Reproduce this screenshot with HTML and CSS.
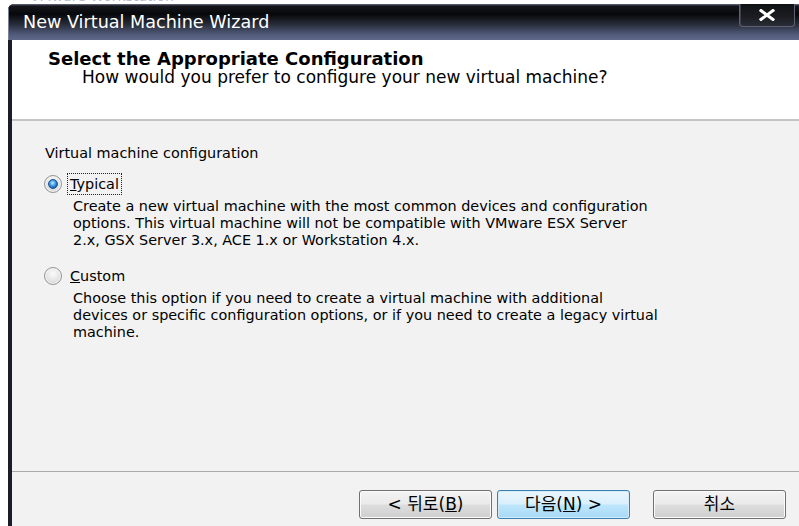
FILE: index.html
```html
<!DOCTYPE html>
<html lang="en">
<head>
<meta charset="utf-8">
<title>New Virtual Machine Wizard</title>
<link rel="stylesheet" href="styles.css">
</head>
<body>
  <div class="backdrop"><span>VMware Workstation</span></div>
  <div class="window">
    <div class="titlebar">
      <span class="title">New Virtual Machine Wizard</span>
      <button class="close" aria-label="Close">
        <svg width="16" height="12" viewBox="0 0 16 12"><path d="M2 1.5 L14 10.5 M14 1.5 L2 10.5" stroke="#fff" stroke-width="3" stroke-linecap="square"/></svg>
      </button>
    </div>
    <div class="frame">
      <header class="page-head">
        <h1>Select the Appropriate Configuration</h1>
        <p>How would you prefer to configure your new virtual machine?</p>
      </header>
      <main class="page-body">
        <p class="group-label">Virtual machine configuration</p>
        <div class="option">
          <span class="radio checked"></span>
          <span class="opt-label focused"><u>T</u>ypical</span>
        </div>
        <p class="desc">Create a new virtual machine with the most common devices and configuration<br>options. This virtual machine will not be compatible with VMware ESX Server<br>2.x, GSX Server 3.x, ACE 1.x or Workstation 4.x.</p>
        <div class="option custom">
          <span class="radio"></span>
          <span class="opt-label"><u>C</u>ustom</span>
        </div>
        <p class="desc">Choose this option if you need to create a virtual machine with additional<br>devices or specific configuration options, or if you need to create a legacy virtual<br>machine.</p>
      </main>
      <footer class="buttons">
        <button class="btn">&lt; 뒤로(<u>B</u>)</button>
        <button class="btn default">다음(<u>N</u>) &gt;</button>
        <button class="btn cancel">취소</button>
      </footer>
    </div>
  </div>
</body>
</html>
```

FILE: styles.css
```css
html, body {
  margin: 0;
  padding: 0;
  background: #ffffff;
  overflow: hidden;
}

body {
  width: 799px;
  height: 526px;
  font-family: "DejaVu Sans", "Noto Sans CJK KR", sans-serif;
  color: #000;
}

*, *::before, *::after {
  box-sizing: border-box;
}

/* sliver of the parent window's caption peeking above the dialog */
.backdrop {
  height: 4px;
  overflow: hidden;
  padding-left: 30px;
}
.backdrop span {
  display: block;
  margin-top: -11px;
  font-size: 14px;
  line-height: 14px;
  color: #b4bbcc;
}

.window {
  margin-left: 8px;
  height: 522px;
  display: flex;
  flex-direction: column;
  border-top-left-radius: 6px;
  overflow: hidden;
  background: #1d2029;
}

.titlebar {
  height: 36px;
  flex: none;
  display: flex;
  justify-content: space-between;
  align-items: flex-start;
  padding-left: 15px;
  background: linear-gradient(to bottom,
    #6a7084 0, #14161c 2px, #07080a 28%, #252a36 55%, #4d5775 82%, #5e698b 100%);
  box-shadow: inset 1px 0 #7b8296;
}

.title {
  color: #ffffff;
  font-size: 17.6px;
  line-height: 37px;
}

.close {
  width: 56px;
  height: 23px;
  margin: 0 4px 0 0;
  padding: 0;
  border: 1px solid #5c6273;
  border-top: none;
  border-radius: 0 0 4px 4px;
  background: linear-gradient(to bottom, #101114, #1b1d22 60%, #2a2d36);
  box-shadow: inset 1px 0 #3c404c;
  display: flex;
  align-items: center;
  justify-content: center;
}

.frame {
  flex: 1;
  display: flex;
  flex-direction: column;
  border-left: 4px solid #2c3140;
  border-image: linear-gradient(to right, #1a1d26, #59627e 50%, #2a2f3d) 1;
}

.page-head {
  height: 81px;
  flex: none;
  background: #ffffff;
  border-bottom: 2px solid #c4c4c4;
  padding: 10px 0 0 36px;
}

.page-head h1 {
  margin: 0;
  font-size: 18px;
  line-height: 17px;
  font-weight: bold;
}

.page-head p {
  margin: 1px 0 0 34px;
  font-size: 17px;
  line-height: 18px;
}

.page-body {
  flex: 1;
  background: #f2f2f2;
  padding: 24px 0 0 32px;
  font-size: 14.4px;
  line-height: 17px;
}

.group-label {
  margin: 0 0 0 1px;
}

.option {
  display: flex;
  align-items: center;
  gap: 5px;
  margin-top: 11px;
}
.option.custom {
  margin-top: 16px;
}

.radio {
  width: 18px;
  height: 18px;
  border-radius: 50%;
  border: 1px solid #959595;
  background: radial-gradient(circle at 50% 35%, #fbfbfb 0, #e4e4e4 55%, #c9c9c9 100%);
  box-shadow: inset 0 0 0 1px #f6f6f6;
  display: flex;
  align-items: center;
  justify-content: center;
}
.radio.checked::after {
  content: "";
  width: 10px;
  height: 10px;
  border-radius: 50%;
  border: 1px solid #1a4f8c;
  background: radial-gradient(circle at 45% 38%, #c8ecff 0, #5fb2ec 30%, #1d6fc4 65%, #0e4d96 100%);
}

.opt-label {
  display: inline-block;
  line-height: 16px;
  padding: 2px 2px;
  border: 1px dotted transparent;
}
.opt-label.focused {
  border-color: #222;
}

.desc {
  margin: 3px 0 0 29px;
}

.buttons {
  height: 55px;
  flex: none;
  background: #f2f2f2;
  border-top: 1px solid #a9a9a9;
  display: flex;
  justify-content: flex-end;
  align-items: flex-start;
  padding: 18px 13px 0 0;
}

.btn {
  width: 133px;
  height: 29px;
  margin: 0;
  padding: 0;
  border: 1px solid #707070;
  border-radius: 3px;
  background: linear-gradient(to bottom, #f2f2f2 0, #ebebeb 48%, #dddddd 52%, #cfcfcf 100%);
  box-shadow: inset 0 0 0 1px #fbfbfb;
  font-family: "DejaVu Sans", "Noto Sans CJK KR", sans-serif;
  font-size: 17px;
  line-height: 27px;
  color: #000;
}
.btn + .btn {
  margin-left: 5px;
}
.btn.default {
  border-color: #3c7fb1;
  background: linear-gradient(to bottom, #eaf6fd 0, #d9f0fc 48%, #bee6fd 52%, #a7d9f5 100%);
  box-shadow: inset 0 0 0 1px #d3ecfa;
}
.btn.cancel {
  margin-left: 23px;
}
```
